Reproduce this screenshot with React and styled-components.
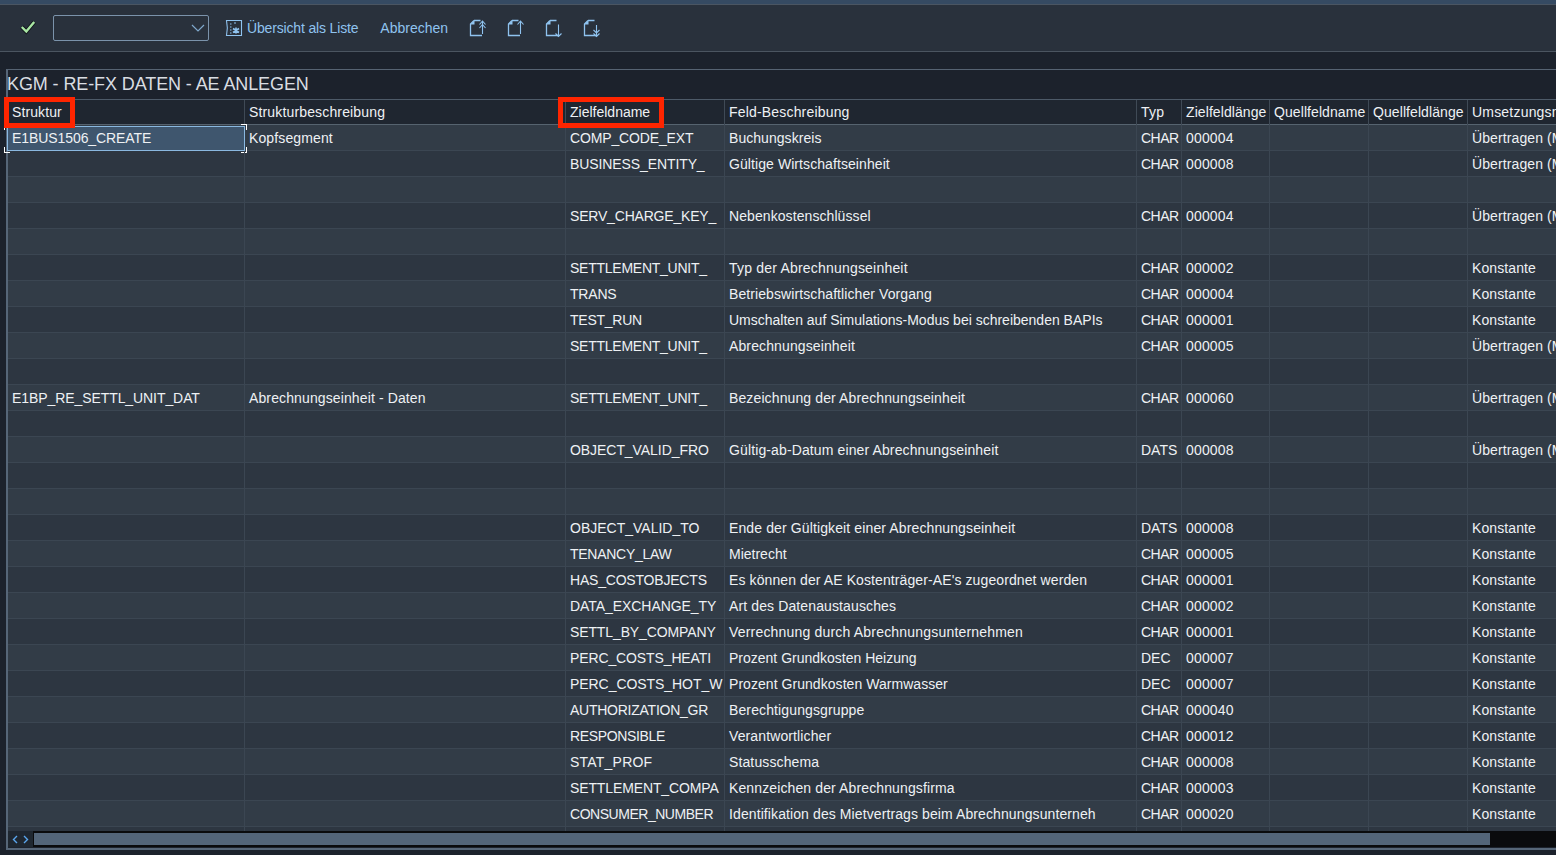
import React from "react";
import styled, { createGlobalStyle } from "styled-components";

const Global = createGlobalStyle`
  html, body { margin: 0; padding: 0; background: #1c222c; overflow: hidden; }
  body { font-family: "Liberation Sans", Arial, sans-serif; }
`;

const Page = styled.div`
  width: 1556px;
  height: 855px;
  overflow: hidden;
  display: flex;
  flex-direction: column;
  background: #1c222c;
`;
const TopStrip = styled.div`
  height: 4px;
  background: #354a62;
  border-bottom: 1px solid #4a5562;
`;
const Toolbar = styled.div`
  height: 46px;
  display: flex;
  align-items: center;
  padding-left: 20px;
  background: #29313c;
  border-bottom: 1px solid #4b5560;
  color: #8fc3ef;
  font-size: 14px;
`;
const CheckWrap = styled.span`
  width: 16px;
  height: 16px;
  margin-right: 17px;
  display: flex;
`;
const Select = styled.div`
  width: 151px;
  height: 24px;
  border: 1px solid #7b93ab;
  border-radius: 2px;
  display: flex;
  align-items: center;
  justify-content: flex-end;
  padding-right: 3px;
  box-sizing: content-box;
  margin-right: 16px;
`;
const ToolText = styled.span`
  margin-left: ${(p) => p.$ml}px;
  margin-right: ${(p) => p.$mr}px;
  letter-spacing: ${(p) => p.$ls || 0}px;
  white-space: nowrap;
`;
const ToolIcon = styled.svg`
  width: 18px;
  height: 20px;
  margin-right: 20px;
  flex: none;
`;
const ListIcon = styled.svg`
  width: 18px;
  height: 18px;
  flex: none;
`;
const Frame = styled.div`
  margin: 17px 0 0 6px;
  width: 1600px;
  height: 778px;
  border-top: 1px solid #566372;
  border-left: 2px solid #566678;
  border-bottom: 2px solid #566678;
  display: flex;
  flex-direction: column;
  color: #eef1f4;
`;
const Title = styled.div`
  height: 29px;
  line-height: 28px;
  font-size: 18px;
  margin-left: -1px;
  letter-spacing: -0.1px;
  color: #d9dde2;
  white-space: nowrap;
`;
const Columns = styled.div`
  display: grid;
  grid-template-columns: 237px 321px 159px 412px 45px 88px 99px 99px 140px;
  height: ${(p) => p.$h}px;
  box-sizing: border-box;
  background: ${(p) => p.$bg};
  border-bottom: 1px solid ${(p) => p.$line};
  border-top: ${(p) => (p.$head ? "1px solid #4d5a68" : "none")};
  font-size: 14px;
`;
const Cell = styled.div`
  position: relative;
  padding-left: 4px;
  border-right: 1px solid ${(p) => p.$line};
  white-space: nowrap;
  overflow: ${(p) => (p.$over ? "visible" : "hidden")};
  line-height: ${(p) => p.$lh}px;
  height: 25px;
  letter-spacing: ${(p) => p.$ls || 0}px;
`;
const RedBox = styled.span`
  position: absolute;
  z-index: 2;
  top: -3px;
  left: ${(p) => p.$l}px;
  width: ${(p) => p.$w}px;
  height: 31px;
  box-sizing: border-box;
  border: 5px solid #ff2500;
  pointer-events: none;
`;
const Selected = styled.span`
  position: absolute;
  left: -1px;
  top: 1px;
  width: 238px;
  height: 25px;
  box-sizing: border-box;
  padding-left: 4px;
  line-height: 23px;
  background: #3f566e;
  border: 1px solid #8ab8e0;
`;
const Corner = styled.i`
  position: absolute;
  width: 5px;
  height: 5px;
  ${(p) => (p.$r ? "right: -3px;" : "left: -4px;")}
  ${(p) => (p.$b ? "bottom: -3px;" : "top: -3px;")}
  ${(p) => (p.$b ? "border-bottom: 1px solid #fff;" : "border-top: 1px solid #fff;")}
  ${(p) => (p.$r ? "border-right: 1px solid #fff;" : "border-left: 1px solid #fff;")}
`;
const Rows = styled.div`
  height: 705px;
  flex: none;
  clip-path: inset(-6px -6px 0 -6px);
  border-bottom: 1px solid #566678;
`;
const Scroll = styled.div`
  height: 16px;
  display: flex;
  align-items: center;
  background: #0a0b0d;
`;
const ScrollButtons = styled.div`
  width: 25px;
  height: 16px;
  background: #1f2730;
  display: flex;
  align-items: center;
  justify-content: space-around;
  padding: 0 1px;
  box-sizing: border-box;
  flex: none;
`;
const Thumb = styled.div`
  width: 1456px;
  height: 12px;
  margin-left: 1px;
  background: #536579;
`;

const COLS = [
  ["Struktur", 0.1],
  ["Strukturbeschreibung", 0.15],
  ["Zielfeldname", 0],
  ["Feld-Beschreibung", 0.18],
  ["Typ", 0.2],
  ["Zielfeldlänge", 0.08],
  ["Quellfeldname", 0.08],
  ["Quellfeldlänge", 0.08],
  ["Umsetzungsmethode", 0.2],
];
const FIELD_SPACING = {
  COMP_CODE_EXT: -0.15,
  BUSINESS_ENTITY_: -0.1,
  SERV_CHARGE_KEY_: -0.19,
  SETTLEMENT_UNIT_: -0.25,
  TRANS: -0.2,
  TEST_RUN: -0.25,
  OBJECT_VALID_FRO: -0.06,
  OBJECT_VALID_TO: 0,
  TENANCY_LAW: -0.27,
  HAS_COSTOBJECTS: -0.2,
  DATA_EXCHANGE_TY: -0.06,
  SETTL_BY_COMPANY: -0.12,
  PERC_COSTS_HEATI: -0.12,
  PERC_COSTS_HOT_W: -0.06,
  AUTHORIZATION_GR: -0.25,
  RESPONSIBLE: -0.36,
  STAT_PROF: 0.22,
  SETTLEMENT_COMPA: -0.12,
  CONSUMER_NUMBER: -0.47,
};
const TEXT_SPACING = {
  "Umschalten auf Simulations-Modus bei schreibenden BAPIs": 0,
  "Verrechnung durch Abrechnungsunternehmen": 0.19,
  "Typ der Abrechnungseinheit": 0.2,
  "Betriebswirtschaftlicher Vorgang": 0.09,
  "Es können der AE Kostenträger-AE's zugeordnet werden": 0.1,
  "Identifikation des Mietvertrags beim Abrechnungsunterneh": 0.1,
  "Prozent Grundkosten Warmwasser": 0.05,
  "Prozent Grundkosten Heizung": 0,
  "Buchungskreis": 0.05,
  "Gültige Wirtschaftseinheit": 0.08,
  "Nebenkostenschlüssel": 0.08,
  "Mietrecht": 0,
};
const spacing = (col, v) => {
  if (col === 2) return FIELD_SPACING[v] || 0;
  if (col === 3 && v in TEXT_SPACING) return TEXT_SPACING[v];
  if (col === 4) return v === "CHAR" ? -0.5 : 0;
  return { 0: -0.08, 1: 0.12, 3: 0.12, 5: 0.17, 8: 0.1 }[col] || 0;
};

const U = "Übertragen (M";
const K = "Konstante";
const DATA = [
  ["E1BUS1506_CREATE","Kopfsegment","COMP_CODE_EXT","Buchungskreis","CHAR","000004",U],
  ["","","BUSINESS_ENTITY_","Gültige Wirtschaftseinheit","CHAR","000008",U],
  [],
  ["","","SERV_CHARGE_KEY_","Nebenkostenschlüssel","CHAR","000004",U],
  [],
  ["","","SETTLEMENT_UNIT_","Typ der Abrechnungseinheit","CHAR","000002",K],
  ["","","TRANS","Betriebswirtschaftlicher Vorgang","CHAR","000004",K],
  ["","","TEST_RUN","Umschalten auf Simulations-Modus bei schreibenden BAPIs","CHAR","000001",K],
  ["","","SETTLEMENT_UNIT_","Abrechnungseinheit","CHAR","000005",U],
  [],
  ["E1BP_RE_SETTL_UNIT_DAT","Abrechnungseinheit - Daten","SETTLEMENT_UNIT_","Bezeichnung der Abrechnungseinheit","CHAR","000060",U],
  [],
  ["","","OBJECT_VALID_FRO","Gültig-ab-Datum einer Abrechnungseinheit","DATS","000008",U],
  [],
  [],
  ["","","OBJECT_VALID_TO","Ende der Gültigkeit einer Abrechnungseinheit","DATS","000008",K],
  ["","","TENANCY_LAW","Mietrecht","CHAR","000005",K],
  ["","","HAS_COSTOBJECTS","Es können der AE Kostenträger-AE's zugeordnet werden","CHAR","000001",K],
  ["","","DATA_EXCHANGE_TY","Art des Datenaustausches","CHAR","000002",K],
  ["","","SETTL_BY_COMPANY","Verrechnung durch Abrechnungsunternehmen","CHAR","000001",K],
  ["","","PERC_COSTS_HEATI","Prozent Grundkosten Heizung","DEC","000007",K],
  ["","","PERC_COSTS_HOT_W","Prozent Grundkosten Warmwasser","DEC","000007",K],
  ["","","AUTHORIZATION_GR","Berechtigungsgruppe","CHAR","000040",K],
  ["","","RESPONSIBLE","Verantwortlicher","CHAR","000012",K],
  ["","","STAT_PROF","Statusschema","CHAR","000008",K],
  ["","","SETTLEMENT_COMPA","Kennzeichen der Abrechnungsfirma","CHAR","000003",K],
  ["","","CONSUMER_NUMBER","Identifikation des Mietvertrags beim Abrechnungsunterneh","CHAR","000020",K],
  [],
];

const Doc = () => (
  <>
    <path d="M5 2.5H11.5M5 2.5L1.5 6V17.5H13" fill="none" stroke="currentColor" strokeWidth="1.3" />
    <path d="M5.5 2V6.5H1Z" fill="currentColor" />
  </>
);
const IconUpDouble = () => (
  <ToolIcon viewBox="0 0 18 20"><Doc />
    <path d="M13.5 16V3M10.5 6.5L13.5 3L16.5 6.5M10.5 10L13.5 6.5L16.5 10" fill="none" stroke="currentColor" strokeWidth="1.1" />
  </ToolIcon>
);
const IconUp = () => (
  <ToolIcon viewBox="0 0 18 20"><Doc />
    <path d="M13.5 16V3M10.5 6.5L13.5 3L16.5 6.5" fill="none" stroke="currentColor" strokeWidth="1.1" />
  </ToolIcon>
);
const IconDown = () => (
  <ToolIcon viewBox="0 0 18 20"><Doc />
    <path d="M13.5 6.5V18.5M10.5 15.5L13.5 18.5L16.5 15.5" fill="none" stroke="currentColor" strokeWidth="1.1" />
  </ToolIcon>
);
const IconDownDouble = () => (
  <ToolIcon viewBox="0 0 18 20"><Doc />
    <path d="M13.5 7V18.5M10.5 12L13.5 15L16.5 12M10.5 15.5L13.5 18.5L16.5 15.5" fill="none" stroke="currentColor" strokeWidth="1.1" />
  </ToolIcon>
);

export default function App() {
  return (
    <Page>
      <Global />
      <TopStrip />
      <Toolbar>
        <CheckWrap>
          <svg width="16" height="16" viewBox="0 0 16 16">
            <path d="M1.8 7L6.3 11.5L14.2 2" fill="none" stroke="#10151a" strokeWidth="4.2" />
            <path d="M1.8 7L6.3 11.5L14.2 2" fill="none" stroke="#a8e6a3" strokeWidth="2.4" />
          </svg>
        </CheckWrap>
        <Select>
          <svg width="14" height="8" viewBox="0 0 14 8">
            <path d="M1 1L7 7L13 1" fill="none" stroke="#7fa8cc" strokeWidth="1.2" />
          </svg>
        </Select>
        <ListIcon viewBox="0 0 18 18">
          <path d="M1.5 1.5H16.5V16.5H1.5C2.5 12 2.5 6 1.5 1.5Z" fill="none" stroke="currentColor" strokeWidth="1.1" />
          <path d="M5 5H6.5M5 8H6.5M5 11H6.5M5 14H6.5M9 4H11" stroke="currentColor" strokeWidth="1.2" />
          <path d="M8 9.5L14 13.5M14 9.5L8 13.5M11 8.5V14.5" stroke="currentColor" strokeWidth="1.6" />
        </ListIcon>
        <ToolText $ml={4} $mr={22} $ls={-0.16}>Übersicht als Liste</ToolText>
        <ToolText $ml={0} $mr={21}>Abbrechen</ToolText>
        <IconUpDouble />
        <IconUp />
        <IconDown />
        <IconDownDouble />
      </Toolbar>
      <Frame>
        <Title>KGM - RE-FX DATEN - AE ANLEGEN</Title>
        <Columns $h={26} $bg="#1f2630" $line="#56636f" $head>
          {COLS.map(([c, ls], i) => (
            <Cell key={c} $line="#3f4a56" $lh={25} $ls={ls} $over={i === 0 || i === 2}>
              {c}
              {i === 0 && <RedBox $l={-4} $w={71} />}
              {i === 2 && <RedBox $l={-8} $w={106} />}
            </Cell>
          ))}
        </Columns>
        <Rows>
          {DATA.map((r, i) => {
            const [a, b, c, d, e, f, u] = r;
            const vals = [a, b, c, d, e, f, "", "", u];
            return (
              <Columns key={i} $h={26} $bg={i % 2 === 0 ? "#323c47" : "#2d3641"} $line="#3b4652">
                {vals.map((v, j) => (
                  <Cell key={j} $line="#3b4652" $lh={27} $ls={spacing(j, v)} $over={i === 0 && j === 0}>
                    {i === 0 && j === 0 ? (
                      <Selected>
                        {v}
                        <Corner />
                        <Corner $r />
                        <Corner $b />
                        <Corner $r $b />
                      </Selected>
                    ) : (
                      v
                    )}
                  </Cell>
                ))}
              </Columns>
            );
          })}
        </Rows>
        <Scroll>
          <ScrollButtons>
            <svg width="6" height="9" viewBox="0 0 6 9"><path d="M5 1L1.5 4.5L5 8" fill="none" stroke="#5aa6ee" strokeWidth="1.4" /></svg>
            <svg width="6" height="9" viewBox="0 0 6 9"><path d="M1 1L4.5 4.5L1 8" fill="none" stroke="#5aa6ee" strokeWidth="1.4" /></svg>
          </ScrollButtons>
          <Thumb />
        </Scroll>
      </Frame>
    </Page>
  );
}
